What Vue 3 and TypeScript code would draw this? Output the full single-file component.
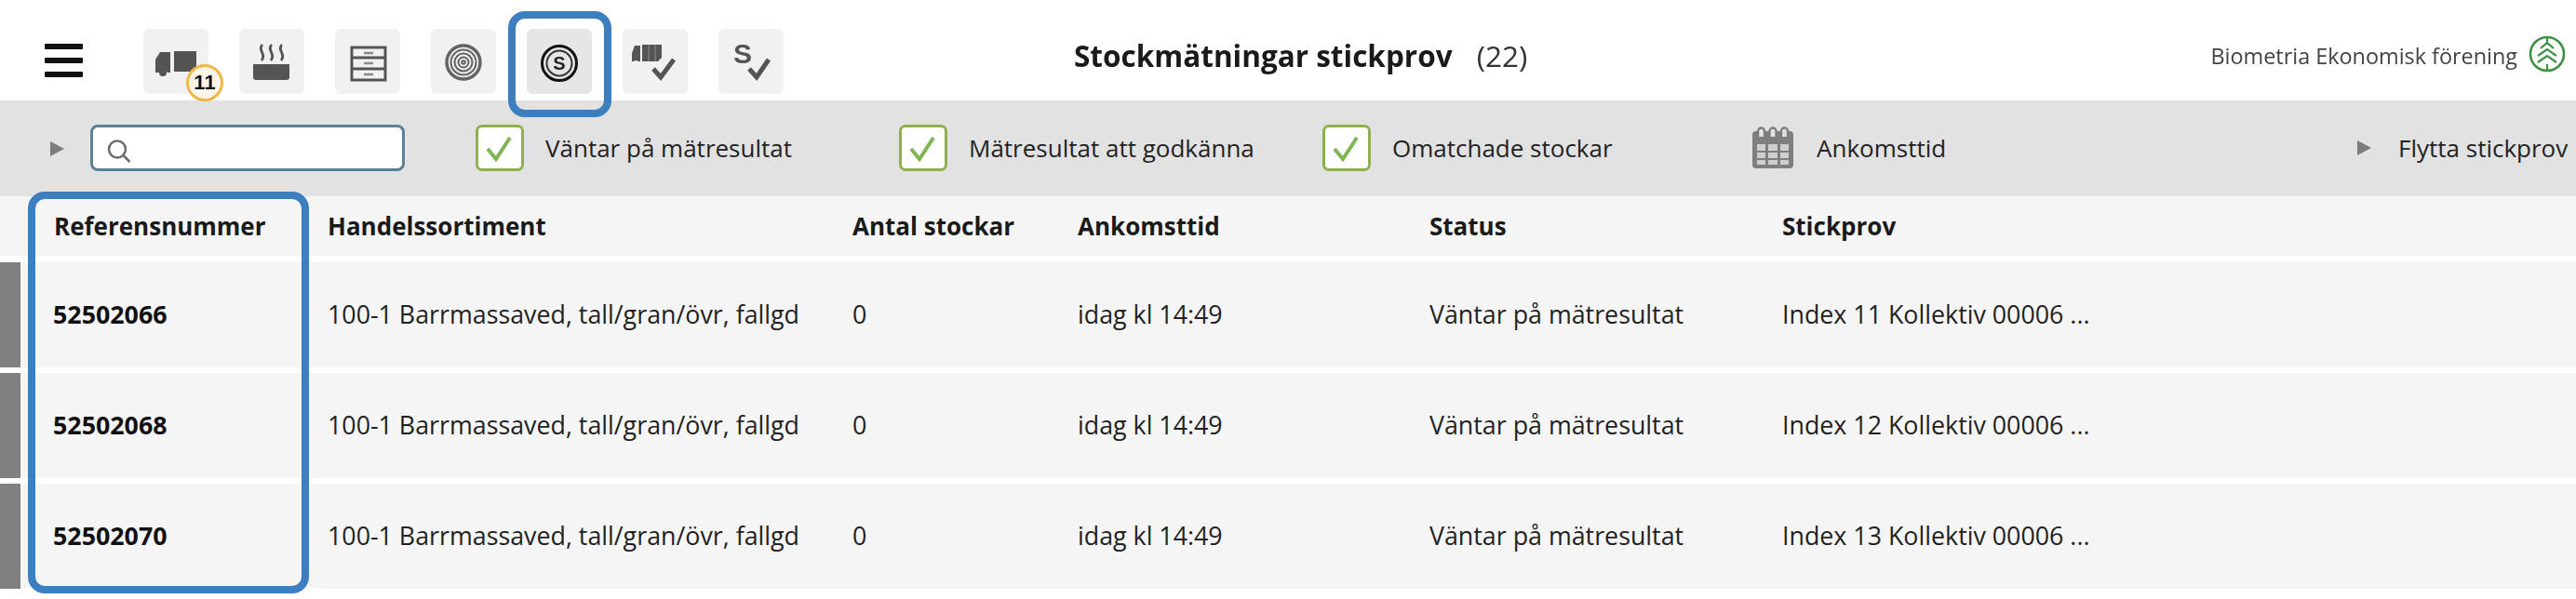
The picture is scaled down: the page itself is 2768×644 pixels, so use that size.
<template>
  <div class="page">
    <header class="topbar">
      <div class="burger"><span></span><span></span><span></span></div>
      <nav class="tools">
        <button class="tool">
          <svg width="70" height="70" viewBox="0 0 70 70" fill="#545454">
            <path d="M13 33l5-8h11v22h-3a5 5 0 0 0-9 0h-4z" />
            <path d="M33 24h24v17l-6 5H33z" />
            <circle cx="21" cy="47" r="4" />
          </svg>
          <span class="badge">11</span>
        </button>
        <button class="tool">
          <svg width="70" height="70" viewBox="0 0 70 70">
            <path d="M15 38h39v14a3 3 0 0 1-3 3H18a3 3 0 0 1-3-3z" fill="#545454" />
            <path d="M25 17c-6 5 5 11-1 17M35 17c-6 5 5 11-1 17M46 17c-6 5 5 11-1 17" fill="none" stroke="#545454" stroke-width="2.8" />
          </svg>
        </button>
        <button class="tool">
          <svg width="70" height="70" viewBox="0 0 70 70" fill="none" stroke="#545454" stroke-width="3">
            <rect x="18" y="20" width="36" height="35" />
            <path d="M18 31h36M18 43h36" />
            <path d="M31 26h10M31 37h10M31 49h10" stroke="#8a8a8a" stroke-width="2.4" />
          </svg>
        </button>
        <button class="tool">
          <svg width="70" height="70" viewBox="0 0 70 70" fill="none" stroke="#636363" stroke-width="2">
            <circle cx="35" cy="36" r="18" stroke-width="3.4" />
            <circle cx="35" cy="36" r="13.5" />
            <circle cx="35" cy="36" r="9.5" />
            <circle cx="35" cy="36" r="5.5" />
            <circle cx="35" cy="36" r="1.8" />
          </svg>
        </button>
        <button class="tool active">
          <svg width="70" height="70" viewBox="0 0 70 70" fill="none">
            <circle cx="35" cy="37" r="18.5" stroke="#111" stroke-width="3" />
            <circle cx="35" cy="37" r="13.5" stroke="#333" stroke-width="2" />
          </svg>
          <span class="tool-s">S</span>
        </button>
        <button class="tool">
          <svg width="70" height="70" viewBox="0 0 70 70" fill="#545454">
            <path d="M10 26l3-8h6v17h-2.500a3 3 0 0 0-4.500 0h-2z" />
            <path d="M21 17h21v14l-4 4H21z" />
            <path d="M28 17v18M35 17v18" stroke="#8c8c8c" stroke-width="1" />
            <path d="M33 43l8 9 14-19" fill="none" stroke="#545454" stroke-width="5" />
          </svg>
        </button>
        <button class="tool">
          <svg width="70" height="70" viewBox="0 0 70 70">
            <path d="M33 43l8 9 13-19" fill="none" stroke="#545454" stroke-width="5" />
          </svg>
          <span class="tool-s plain">S</span>
        </button>
      </nav>
      <h1 class="title">Stockmätningar stickprov <span class="count">(22)</span></h1>
      <div class="org">
        <span class="org-name">Biometria Ekonomisk förening</span>
        <svg width="40" height="40" viewBox="0 0 40 40" fill="none" stroke="#3f9148">
          <circle cx="20" cy="20" r="18" stroke-width="2.6" />
          <path d="M20 3v7M20 31v6M13 14l7-6 7 6M10 22l10-7 10 7M10 29l10-7 10 7" stroke-width="2.2" />
        </svg>
      </div>
    </header>

    <section class="filters">
      <span class="arrow"></span>
      <div class="search">
        <svg width="26" height="26" viewBox="0 0 26 26" fill="none" stroke="#6f6f6f" stroke-width="2.6">
          <circle cx="11" cy="10.500" r="9" />
          <path d="M17.500 17l7 7" />
        </svg>
      </div>
      <label v-for="f in checks" :key="f.label" class="check" :style="{ left: f.x + 'px' }">
        <span class="box">
          <svg width="30" height="30" viewBox="0 0 30 30" fill="none" stroke="#7fb552" stroke-width="4">
            <path d="M2 16l9 11L26 4" />
          </svg>
        </span>
        {{ f.label }}
      </label>
      <div class="date">
        <svg width="46" height="46" viewBox="0 0 46 46">
          <rect x="1" y="5" width="44" height="40" rx="4" fill="#7f7f7f" />
          <path
            d="M6 19h9v7H6zM18 19h10v7H18zM31 19h9v7h-9zM6 28h9v6H6zM18 28h10v6H18zM31 28h9v6h-9zM6 36h9v5H6zM18 36h10v5H18zM31 36h9v5h-9z"
            fill="#cfcfcf"
          />
          <path d="M7 11V5a3.500 3.500 0 0 1 7 0v6M19.500 11V5a3.500 3.500 0 0 1 7 0v6M32 11V5a3.500 3.500 0 0 1 7 0v6" fill="#e2e2e2" stroke="#7f7f7f" stroke-width="2.4" />
        </svg>
        Ankomsttid
      </div>
      <div class="move"><span class="arrow"></span>Flytta stickprov</div>
    </section>

    <section class="table">
      <div class="row head">
        <div v-for="h in heads" :key="h">{{ h }}</div>
      </div>
      <div v-for="r in rows" :key="r.ref" class="row body">
        <div class="ref">{{ r.ref }}</div>
        <div>100-1 Barrmassaved, tall/gran/övr, fallgd</div>
        <div>0</div>
        <div>idag kl 14:49</div>
        <div>Väntar på mätresultat</div>
        <div>{{ r.sample }}</div>
      </div>
      <div class="highlight"></div>
    </section>
  </div>
</template>

<script setup lang="ts">
type CheckFilter = { label: string; x: number }
type TableRow = { ref: string; sample: string }

const checks: CheckFilter[] = [
  { label: 'Väntar på mätresultat', x: 511 },
  { label: 'Mätresultat att godkänna', x: 966 },
  { label: 'Omatchade stockar', x: 1421 }
]

const heads = ['Referensnummer', 'Handelssortiment', 'Antal stockar', 'Ankomsttid', 'Status', 'Stickprov']

const rows: TableRow[] = [
  { ref: '52502066', sample: 'Index 11 Kollektiv 00006 ...' },
  { ref: '52502068', sample: 'Index 12 Kollektiv 00006 ...' },
  { ref: '52502070', sample: 'Index 13 Kollektiv 00006 ...' }
]
</script>

<style>
html,
body {
  margin: 0;
  background: #fff;
}
</style>

<style scoped>
.page {
  width: 2768px;
  height: 644px;
  overflow: hidden;
  font-family: "Open Sans", "Liberation Sans", sans-serif;
  color: #222;
  font-size: 26px;
  filter: blur(0.5px);
}

.topbar {
  position: relative;
  z-index: 1;
  height: 108px;
  display: flex;
  align-items: flex-start;
  padding-left: 48px;
  box-sizing: border-box;
}

.burger {
  width: 41px;
  display: flex;
  flex-direction: column;
  gap: 9px;
  margin-top: 47px;
}

.burger span {
  height: 6px;
  border-radius: 1px;
  background: #111;
}

.tools {
  display: flex;
  gap: 33px;
  margin-left: 65px;
  margin-top: 31px;
}

.tool {
  position: relative;
  width: 70px;
  height: 70px;
  padding: 0;
  border: 0;
  border-radius: 6px;
  background: #f1f1f1;
}

.tool svg {
  display: block;
}

.tool.active {
  background: #e6e6e6;
}

.tool.active::after {
  content: "";
  position: absolute;
  left: -20px;
  top: -19px;
  width: 111px;
  height: 114px;
  box-sizing: border-box;
  border: 8px solid #3d7ebf;
  border-radius: 18px;
}

.tool-s {
  position: absolute;
  left: 0;
  right: 0;
  top: 22px;
  text-align: center;
  font-size: 20px;
  line-height: 30px;
  font-weight: 700;
  color: #222;
}

.tool-s.plain {
  left: 16px;
  right: auto;
  top: 7px;
  font-size: 30px;
  line-height: 40px;
  color: #545454;
}

.badge {
  position: absolute;
  left: 46px;
  top: 38px;
  width: 40px;
  height: 40px;
  box-sizing: border-box;
  border: 3px solid #f0b64a;
  border-radius: 50%;
  background: #fdf6e8;
  color: #111;
  font-size: 22px;
  font-weight: 700;
  line-height: 34px;
  text-align: center;
}

.title {
  position: absolute;
  left: 1154px;
  top: 40px;
  margin: 0;
  font-size: 31.5px;
  line-height: 40px;
  font-weight: 700;
  color: #1a1a1a;
  white-space: nowrap;
}

.count {
  margin-left: 18px;
  font-weight: 400;
  color: #333;
}

.org {
  position: absolute;
  right: 11px;
  top: 38px;
  display: flex;
  align-items: center;
  gap: 12px;
  font-size: 23.4px;
  color: #444;
}

.org-name {
  padding-top: 3px;
}

.filters {
  position: relative;
  height: 103px;
  background: #e2e2e2;
}

.arrow {
  display: block;
  width: 0;
  height: 0;
  border-left: 15px solid #7c7c7c;
  border-top: 8px solid transparent;
  border-bottom: 8px solid transparent;
}

.filters > .arrow {
  position: absolute;
  left: 54px;
  top: 44px;
}

.search {
  position: absolute;
  left: 97px;
  top: 26px;
  width: 338px;
  height: 50px;
  box-sizing: border-box;
  border: 3px solid #5b8294;
  border-radius: 8px;
  background: #fff;
  padding: 13px 0 0 15px;
}

.search svg {
  display: block;
}

.check {
  position: absolute;
  top: 26px;
  display: flex;
  align-items: center;
  gap: 23px;
  line-height: 50px;
  white-space: nowrap;
}

.box {
  width: 52px;
  height: 50px;
  box-sizing: border-box;
  border: 3px solid #8fb04f;
  border-radius: 7px;
  background: #fff;
  display: flex;
  align-items: center;
  justify-content: center;
}

.date {
  position: absolute;
  left: 1882px;
  top: 26px;
  display: flex;
  align-items: center;
  gap: 24px;
  line-height: 50px;
}

.move {
  position: absolute;
  left: 2533px;
  top: 26px;
  display: flex;
  align-items: center;
  gap: 29px;
  line-height: 50px;
  white-space: nowrap;
}

.table {
  position: relative;
}

.row {
  display: grid;
  grid-template-columns: 352px 564px 242px 378px 379px 1fr;
  align-items: center;
  background: #f5f5f5;
}

.row > div:first-child {
  padding-left: 58px;
}

.head {
  height: 64px;
  font-weight: 700;
  color: #1a1a1a;
  margin-bottom: 7px;
}

.body {
  position: relative;
  height: 113px;
  box-sizing: border-box;
  padding-bottom: 3px;
  margin-bottom: 6px;
  margin-left: 22px;
  grid-template-columns: 330px 564px 242px 378px 379px 1fr;
  font-size: 26.8px;
}

.body > div:first-child {
  padding-left: 35px;
}

.body::before {
  content: "";
  position: absolute;
  left: -22px;
  top: 0;
  width: 22px;
  height: 100%;
  background: #808080;
}

.ref {
  font-weight: 700;
  color: #111;
}

.highlight {
  position: absolute;
  left: 30px;
  top: -5px;
  width: 302px;
  height: 432px;
  box-sizing: border-box;
  border: 8px solid #3d7ebf;
  border-radius: 18px;
}
</style>
